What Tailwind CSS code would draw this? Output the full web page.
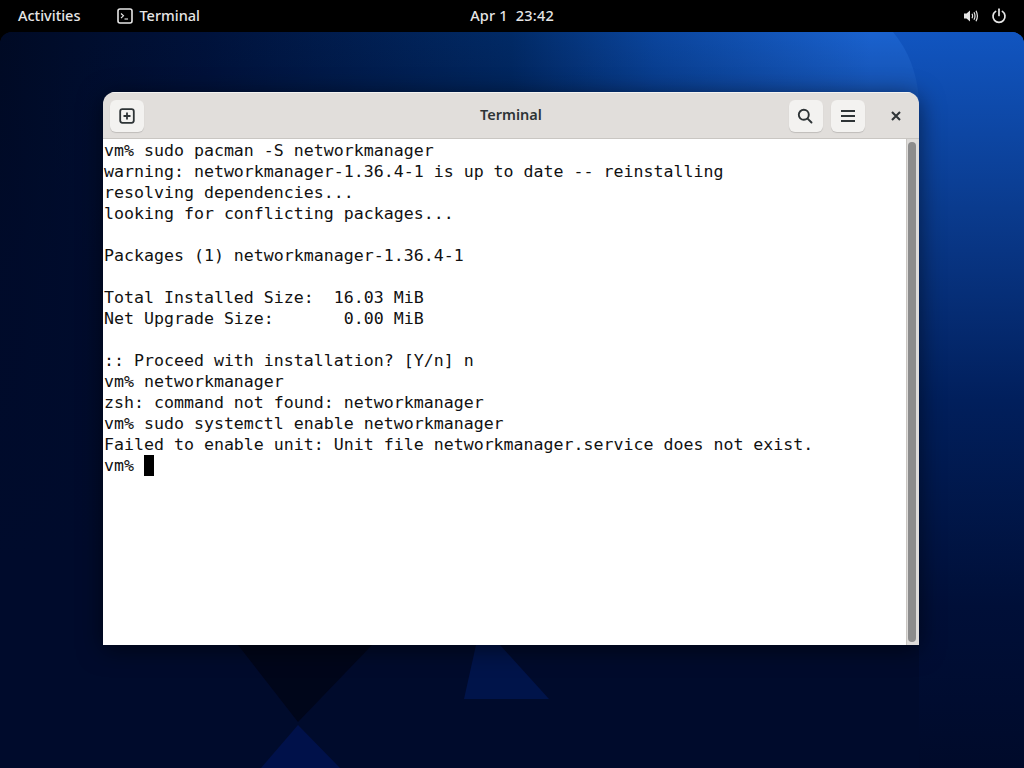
<!DOCTYPE html>
<html lang="en">
<head>
    <meta charset="UTF-8" />
    <title>Terminal</title>
    <script src="https://cdn.jsdelivr.net/npm/@tailwindcss/browser@4"></script>
</head>
<body class="bg-black w-[1024px] h-[768px] overflow-hidden flex flex-col font-['Noto_Sans',sans-serif]">

<!-- top bar -->
<header class="h-8 shrink-0 bg-black text-[#e6e6e6] text-[14.5px] font-medium grid grid-cols-[1fr_auto_1fr] items-center">
    <div class="flex items-center pl-[18px]">
        <span>Activities</span>
        <svg class="ml-[37px] mr-[6px]" width="16" height="16" viewBox="0 0 16 16" fill="none" stroke="#e6e6e6">
            <rect x="1" y="1" width="14" height="14" rx="2" stroke-width="1.6"/>
            <path d="M4 5.5 6.5 7.8 4 10" stroke-width="1.1"/>
            <path d="M7.5 11H11" stroke-width="1.1"/>
        </svg>
        <span>Terminal</span>
    </div>
    <div class="tracking-[0.2px] whitespace-pre">Apr 1  23:42</div>
    <div class="flex items-center justify-end gap-[12px] pr-[17px]">
        <svg width="16" height="16" viewBox="0 0 16 16" fill="none" stroke="#e6e6e6">
            <path d="M1 5.5H3.5L7 2.5V13.5L3.5 10.5H1Z" fill="#e6e6e6" stroke="none"/>
            <path d="M9 5.8Q10.2 8 9 10.2M11 4.2Q13 8 11 11.8M13 2.8Q15.8 8 13 13.2" stroke-width="1.2"/>
        </svg>
        <svg width="16" height="16" viewBox="0 0 16 16" fill="none" stroke="#e6e6e6" stroke-width="1.7" stroke-linecap="round">
            <path d="M8 1.2V7.5"/>
            <path d="M4.6 3.4A6 6 0 1 0 11.4 3.4"/>
        </svg>
    </div>
</header>

<!-- desktop -->
<main class="relative flex-1 rounded-t-[12px] overflow-hidden bg-[#000b2c]">
    <svg class="absolute inset-0" width="1024" height="736" viewBox="0 32 1024 736">
        <defs>
            <linearGradient id="wall" x1="0" y1="0" x2="1" y2="0">
                <stop offset="0" stop-color="#000a24"/>
                <stop offset="0.2" stop-color="#00123b"/>
                <stop offset="0.5" stop-color="#012a66"/>
                <stop offset="0.64" stop-color="#0a459d"/>
                <stop offset="0.85" stop-color="#1a62cf"/>
                <stop offset="1" stop-color="#1a62cf"/>
            </linearGradient>
            <linearGradient id="fade" x1="0" y1="0" x2="0" y2="1">
                <stop offset="0" stop-color="#000b2c" stop-opacity="0"/>
                <stop offset="0.45" stop-color="#000b2c" stop-opacity="0.72"/>
                <stop offset="1" stop-color="#000b2c" stop-opacity="1"/>
            </linearGradient>
            <linearGradient id="rightfade" x1="0" y1="0" x2="0" y2="1">
                <stop offset="0" stop-color="#1155c0"/>
                <stop offset="0.24" stop-color="#0a3b8e"/>
                <stop offset="0.5" stop-color="#011f5c"/>
                <stop offset="0.78" stop-color="#000f38"/>
                <stop offset="1" stop-color="#000a2a"/>
            </linearGradient>
        </defs>
        <rect x="0" y="32" width="1024" height="736" fill="url(#wall)"/>
        <rect x="0" y="32" width="1024" height="530" fill="url(#fade)"/>
        <rect x="0" y="562" width="1024" height="206" fill="#000b2c"/>
        <path d="M893 32C908 50 917 72 919 100V768H1024V32Z" fill="url(#rightfade)"/>
        <path d="M238 645H372L298 722Z" fill="#00061a"/>
        <path d="M298 725 261 768H340Z" fill="#00114a"/>
        <path d="M476 645H500L549 699H464Z" fill="#00144a"/>
    </svg>

    <!-- terminal window -->
    <section class="absolute left-[103px] top-[60px] w-[816px] h-[553px] flex flex-col rounded-t-[12px] overflow-hidden shadow-[0_4px_24px_rgba(0,0,0,0.55)]">
        <div class="h-[46px] shrink-0 bg-[#e1dedb] border-t border-[#f4f3f1] grid grid-cols-[1fr_auto_1fr] items-center px-[7px]">
            <div class="flex">
                <button class="w-[34px] h-[32px] rounded-[6px] bg-[#f3f2f0] shadow-[0_1px_1px_rgba(0,0,0,0.15)] flex items-center justify-center">
                    <svg width="16" height="16" viewBox="0 0 16 16" fill="none" stroke="#2e3436">
                        <rect x="1.2" y="1.2" width="13.6" height="13.6" rx="2.2" stroke-width="1.8"/>
                        <path d="M8 4.5V11.5M4.5 8H11.5" stroke-width="1.8"/>
                    </svg>
                </button>
            </div>
            <div class="text-[14.5px] font-semibold text-[#2e3436] -mt-[2px]">Terminal</div>
            <div class="flex justify-end pr-[8px]">
                <button class="w-[34px] h-[32px] rounded-[6px] bg-[#f3f2f0] shadow-[0_1px_1px_rgba(0,0,0,0.15)] flex items-center justify-center">
                    <svg class="-ml-[2px]" width="16" height="16" viewBox="0 0 16 16" fill="none" stroke="#2e3436" stroke-width="1.9" stroke-linecap="round">
                        <circle cx="6.8" cy="6.8" r="5"/>
                        <path d="M10.6 10.6 14.5 14.5"/>
                    </svg>
                </button>
                <button class="ml-[8px] w-[34px] h-[32px] rounded-[6px] bg-[#f3f2f0] shadow-[0_1px_1px_rgba(0,0,0,0.15)] flex items-center justify-center">
                    <svg width="16" height="14" viewBox="0 0 16 14" stroke="#2e3436" stroke-width="2">
                        <path d="M1 2H15M1 7H15M1 12H15"/>
                    </svg>
                </button>
                <button class="ml-[23px] w-[16px] h-[32px] flex items-center justify-center">
                    <svg width="10" height="10" viewBox="0 0 10 10" stroke="#2e3436" stroke-width="2.1">
                        <path d="M1 1 9 9M9 1 1 9"/>
                    </svg>
                </button>
            </div>
        </div>
        <div class="flex-1 flex bg-white border-t border-[#c9c6c2] min-h-0">
            <pre class="flex-1 pl-px pt-px font-['DejaVu_Sans_Mono',monospace] text-[16.6px] leading-[21px] text-[#111111]">vm% sudo pacman -S networkmanager
warning: networkmanager-1.36.4-1 is up to date -- reinstalling
resolving dependencies...
looking for conflicting packages...

Packages (1) networkmanager-1.36.4-1

Total Installed Size:  16.03 MiB
Net Upgrade Size:       0.00 MiB

:: Proceed with installation? [Y/n] n
vm% networkmanager
zsh: command not found: networkmanager
vm% sudo systemctl enable networkmanager
Failed to enable unit: Unit file networkmanager.service does not exist.
vm% <span class="inline-block w-[10px] h-[21px] bg-black align-top"></span></pre>
            <div class="w-[13px] shrink-0 bg-[#dedcda] border-l border-[#c9c6c2] px-px py-[3px]">
                <div class="h-full w-[8px] rounded-full bg-[#8c8c8c]"></div>
            </div>
        </div>
    </section>
</main>

</body>
</html>
